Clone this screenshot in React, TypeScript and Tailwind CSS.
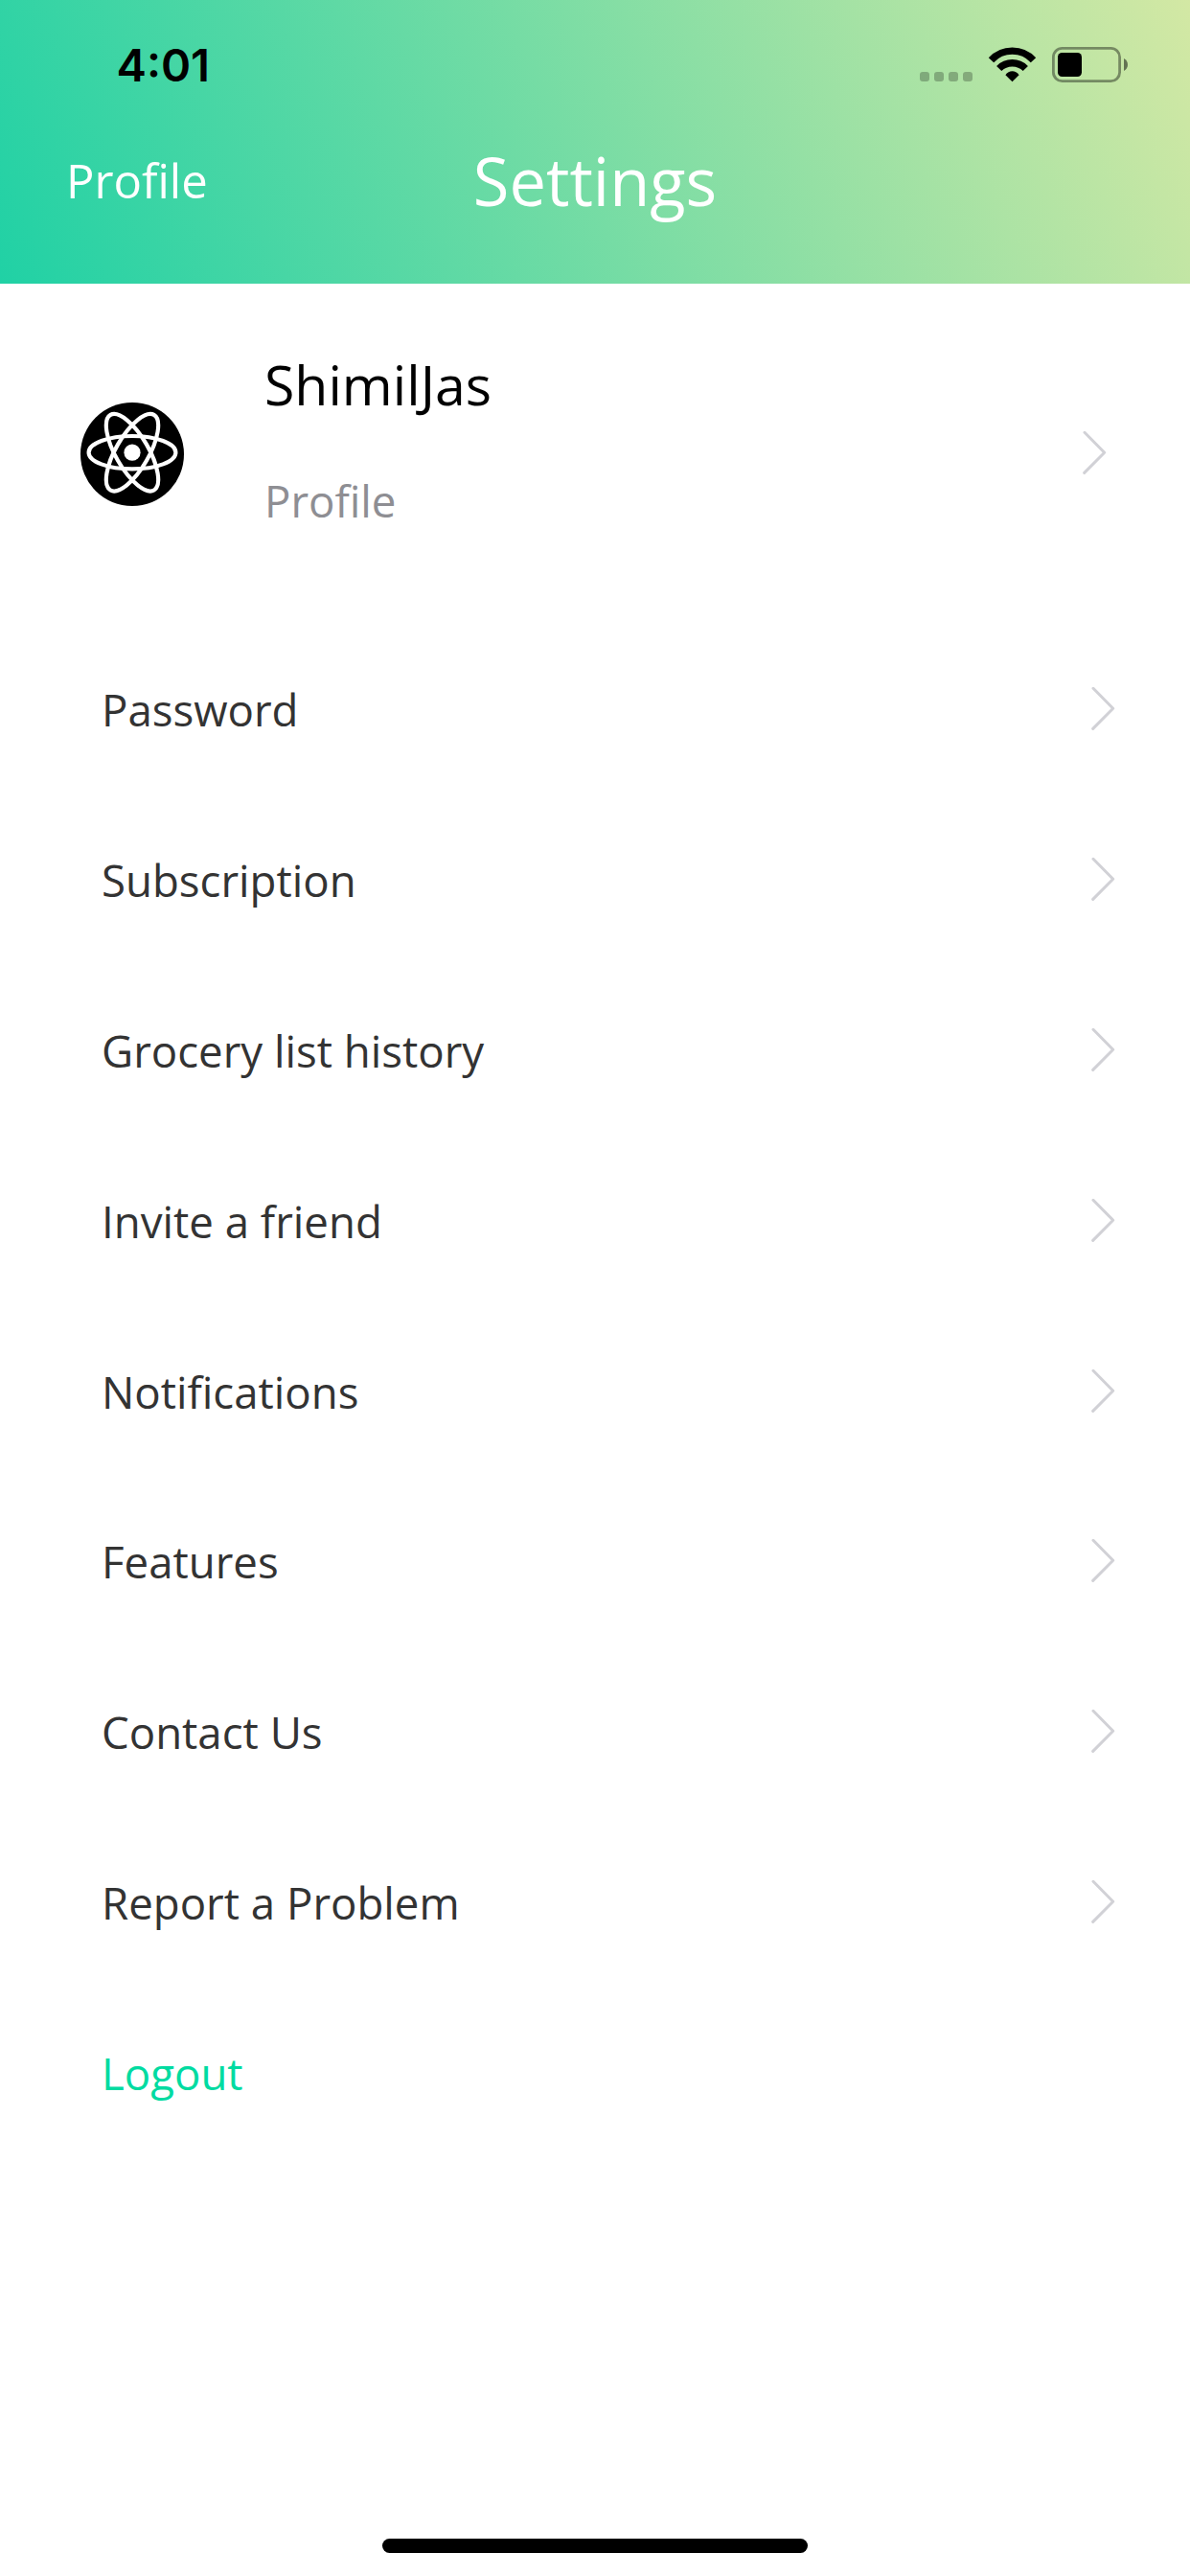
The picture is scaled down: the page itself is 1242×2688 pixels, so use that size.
import React from "react";

const rows = [
  "Password",
  "Subscription",
  "Grocery list history",
  "Invite a friend",
  "Notifications",
  "Features",
  "Contact Us",
  "Report a Problem",
];

function Chevron() {
  return (
    <svg width="26" height="48" viewBox="0 0 26 48" fill="none" className="shrink-0">
      <path
        d="M2 2.3L22.7 23.2L1.7 44.4"
        stroke="#d1d1d6"
        strokeWidth="3"
        strokeLinecap="round"
        strokeLinejoin="round"
      />
    </svg>
  );
}

function StatusIcons() {
  return (
    <svg width="218" height="38" viewBox="0 0 218 38" fill="none">
      <g fill="#000" fillOpacity="0.25">
        <rect x="0" y="26" width="10" height="10" rx="3" />
        <rect x="15" y="26" width="10" height="10" rx="3" />
        <rect x="30" y="26" width="10" height="10" rx="3" />
        <rect x="45" y="26" width="10" height="10" rx="3" />
      </g>
      <g stroke="#000" strokeWidth="7.4">
        <path d="M74.5 13.7A30 30 0 0 1 118.5 13.7" />
        <path d="M82.7 22.5A19.5 19.5 0 0 1 110.3 22.5" />
      </g>
      <path d="M89.4 29.2C93 23.8 100 23.8 103.6 29.2L96.5 36.2Z" fill="#000" />
      <rect x="139.4" y="1.4" width="69.2" height="34.2" rx="9.2" stroke="#000" strokeOpacity="0.4" strokeWidth="2.8" />
      <rect x="144" y="6" width="25" height="25" rx="4.5" fill="#000" />
      <path d="M213 12C218.3 14.5 218.3 22.5 213 25Z" fill="#000" fillOpacity="0.5" />
    </svg>
  );
}

function Avatar() {
  return (
    <svg width="108" height="108" viewBox="0 0 108 108" fill="none" className="shrink-0">
      <circle cx="54" cy="54" r="54" fill="#000" />
      <circle cx="54" cy="52.2" r="8.6" fill="#fff" />
      <g stroke="#fff" strokeWidth="4.2">
        <ellipse cx="54" cy="52.2" rx="45.4" ry="17.2" />
        <ellipse cx="54" cy="52.2" rx="45.4" ry="17.2" transform="rotate(60 54 52.2)" />
        <ellipse cx="54" cy="52.2" rx="45.4" ry="17.2" transform="rotate(120 54 52.2)" />
      </g>
    </svg>
  );
}

export default function App() {
  return (
    <div className="flex h-[2688px] w-[1242px] flex-col overflow-hidden bg-white font-['Open_Sans',sans-serif]">
      <header className="flex h-[296px] shrink-0 flex-col bg-[linear-gradient(66deg,#20d1a5,#d3e8a4)]">
        <div className="flex h-[136px] items-start justify-between pr-[64px] pl-[121.5px]">
          <span className="mt-[39px] font-['Inter',sans-serif] text-[47.2px] leading-[57px] font-semibold text-black">
            4:01
          </span>
          <div className="mt-[49px]">
            <StatusIcons />
          </div>
        </div>
        <div className="grid grid-cols-3 items-start text-white">
          <span className="mt-[19px] pl-[69px] text-[49px] leading-[66px]">Profile</span>
          <h1 className="mt-[6px] text-center text-[68.6px] leading-[93px]">Settings</h1>
        </div>
      </header>

      <section className="flex h-[355.5px] shrink-0 items-start pr-[86px] pl-[84px]">
        <div className="mt-[124px]">
          <Avatar />
        </div>
        <div className="mt-[66px] ml-[84px] flex flex-1 flex-col gap-[51px]">
          <span className="text-[57.2px] leading-[78px] text-black">ShimilJas</span>
          <span className="text-[45.6px] leading-[62px] text-[#8e8e93]">Profile</span>
        </div>
        <div className="mt-[153px]">
          <Chevron />
        </div>
      </section>

      <ul className="flex shrink-0 flex-col">
        {rows.map((label) => (
          <li key={label} className="flex h-[177.8px] items-center justify-between pr-[77px] pl-[106px]">
            <span className="text-[45.6px] leading-[62px] text-[#333]">{label}</span>
            <Chevron />
          </li>
        ))}
        <li className="flex h-[177.8px] items-center pl-[106px]">
          <span className="text-[45.6px] leading-[62px] text-[#00dba1]">Logout</span>
        </li>
      </ul>

      <div className="mt-auto mb-[24px] h-[15px] w-[444px] self-center rounded-full bg-black" />
    </div>
  );
}
